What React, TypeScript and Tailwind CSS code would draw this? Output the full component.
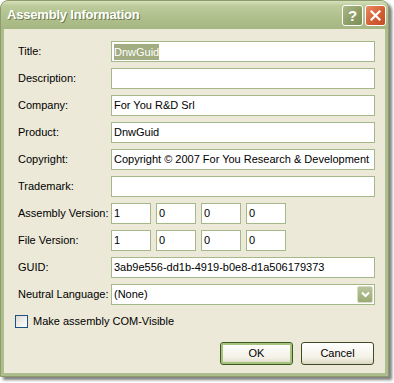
import React from "react";

const rows: { label: string; value?: string; kind?: string }[] = [
  { label: "Title:", value: "DnwGuid", kind: "selected" },
  { label: "Description:", value: "" },
  { label: "Company:", value: "For You R&D Srl" },
  { label: "Product:", value: "DnwGuid" },
  { label: "Copyright:", value: "Copyright © 2007 For You Research & Development" },
  { label: "Trademark:", value: "" },
  { label: "Assembly Version:", kind: "version" },
  { label: "File Version:", kind: "version" },
  { label: "GUID:", value: "3ab9e556-dd1b-4919-b0e8-d1a506179373" },
  { label: "Neutral Language:", value: "(None)", kind: "combo" },
];

function Box({ children, className = "" }: { children?: React.ReactNode; className?: string }) {
  return (
    <div
      className={`h-[21px] border border-[#a5b88a] bg-white flex items-center pl-[2px] text-black whitespace-nowrap overflow-hidden ${className}`}
    >
      {children}
    </div>
  );
}

export default function App() {
  return (
    <div className="w-[394px] h-[383px] bg-white font-['Liberation_Sans',sans-serif] text-[11px] text-black">
      <div className="w-[389px] h-[377px] rounded-t-[8px] bg-[#adbd8b] border border-[#8d9c6c] flex flex-col shadow-[3px_3px_3px_rgba(0,0,0,0.5)]">
        {/* Title bar */}
        <div className="h-[28px] shrink-0 rounded-t-[7px] bg-[linear-gradient(to_bottom,#d6e0bb_0%,#bccb9a_18%,#b0c08e_55%,#a6b783_100%)] flex items-center pl-[6px] pr-[2px]">
          <span className="text-white font-bold text-[13px] tracking-[-0.2px] [text-shadow:1px_1px_0_#6f7d4c]">
            Assembly Information
          </span>
          <div className="ml-auto flex gap-[2px] items-center">
            <div className="w-[21px] h-[21px] rounded-[3px] border border-white bg-[linear-gradient(135deg,#a9b886_0%,#8c9c64_60%,#7e8e58_100%)] flex items-center justify-center">
              <span className="text-white font-bold text-[15px] leading-none">?</span>
            </div>
            <div className="w-[21px] h-[21px] rounded-[3px] border border-white bg-[linear-gradient(135deg,#e98a63_0%,#d45f35_55%,#c24a25_100%)] flex items-center justify-center">
              <svg width="11" height="11" viewBox="0 0 11 11">
                <path d="M1.5 1.5 L9.5 9.5 M9.5 1.5 L1.5 9.5" stroke="white" strokeWidth="2.2" strokeLinecap="square" />
              </svg>
            </div>
          </div>
        </div>
        {/* Body */}
        <div className="flex-1 mx-[3px] mb-[3px] bg-[#ece9d8] flex flex-col pt-[12px] pl-[14px] pr-[10px]">
          <div className="flex flex-col gap-[6px]">
            {rows.map((r) => (
              <div key={r.label} className="flex items-center h-[21px]">
                <div className="w-[93px] shrink-0">{r.label}</div>
                {r.kind === "version" ? (
                  <div className="flex gap-[5px]">
                    {["1", "0", "0", "0"].map((v, i) => (
                      <Box key={i} className="w-[40px]">
                        {v}
                      </Box>
                    ))}
                  </div>
                ) : r.kind === "combo" ? (
                  <Box className="flex-1 pr-[1px]">
                    <span>{r.value}</span>
                    <div className="ml-auto w-[16px] h-[17px] rounded-[2px] border border-[#d6dcc6] bg-[linear-gradient(to_bottom,#b8c59a,#9aab74)] flex items-center justify-center">
                      <svg width="9" height="7" viewBox="0 0 9 7">
                        <path d="M1 1.5 L4.5 5 L8 1.5" stroke="white" strokeWidth="2" fill="none" />
                      </svg>
                    </div>
                  </Box>
                ) : r.kind === "selected" ? (
                  <Box className="flex-1">
                    <span className="bg-[#a1ac80] text-white leading-[16px]">{r.value}</span>
                  </Box>
                ) : (
                  <Box className="flex-1">{r.value}</Box>
                )}
              </div>
            ))}
          </div>
          <div className="flex items-center mt-[10px] -ml-[3px] h-[13px] gap-[5px]">
            <div className="w-[13px] h-[13px] border border-[#1c5180] bg-[linear-gradient(135deg,#dcdbd4,#ffffff)]" />
            <span>Make assembly COM-Visible</span>
          </div>
          <div className="flex justify-end gap-[8px] mt-[14px] pr-[1px]">
            <div className="w-[73px] h-[23px] rounded-[3px] border border-[#3b5a22] shadow-[inset_0_0_0_2px_#a7c27e] bg-[linear-gradient(to_bottom,#ffffff,#f3f1e6_70%,#dcd7c4)] flex items-center justify-center">
              OK
            </div>
            <div className="w-[73px] h-[23px] rounded-[3px] border border-[#3f4b22] bg-[linear-gradient(to_bottom,#ffffff,#f3f1e6_70%,#dcd7c4)] flex items-center justify-center">
              Cancel
            </div>
          </div>
        </div>
      </div>
    </div>
  );
}
